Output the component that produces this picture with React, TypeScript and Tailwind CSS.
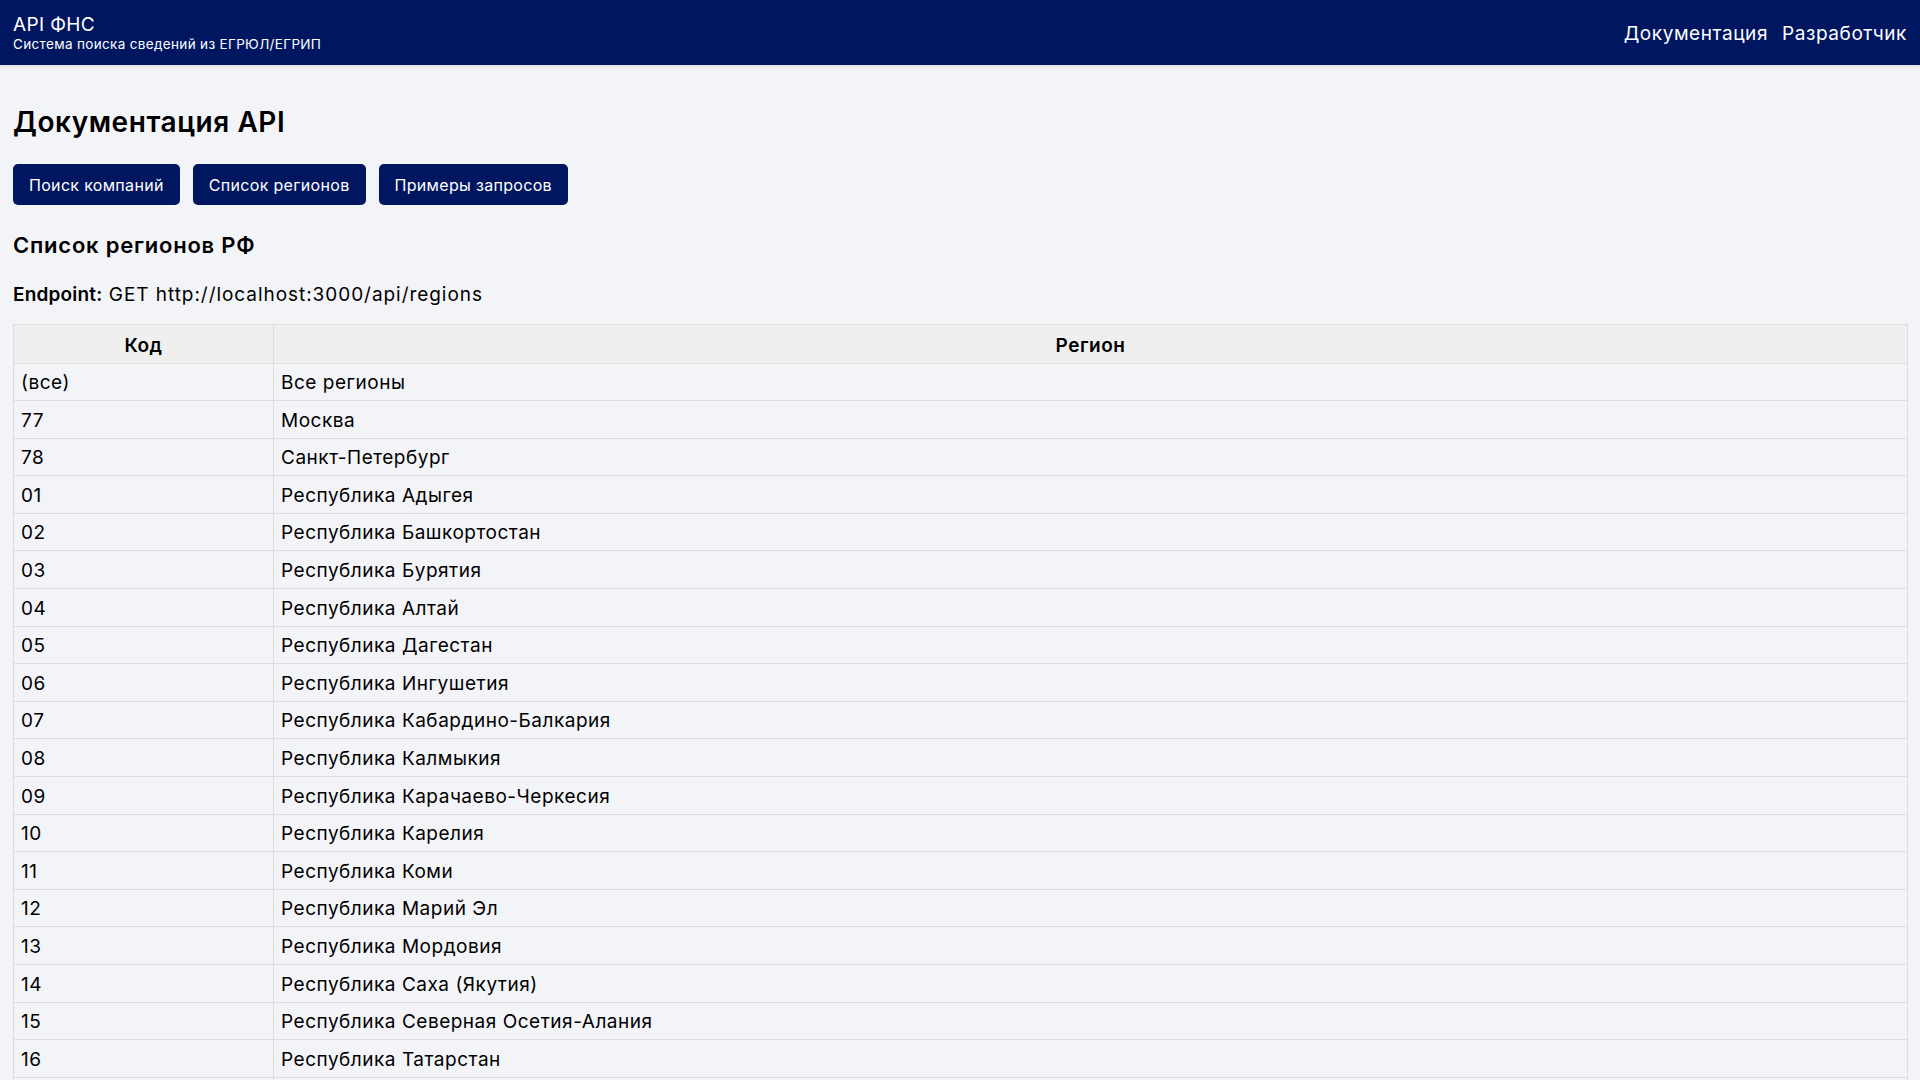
import React from "react";

const regions: [string, string][] = [
  ["(все)", "Все регионы"],
  ["77", "Москва"],
  ["78", "Санкт-Петербург"],
  ["01", "Республика Адыгея"],
  ["02", "Республика Башкортостан"],
  ["03", "Республика Бурятия"],
  ["04", "Республика Алтай"],
  ["05", "Республика Дагестан"],
  ["06", "Республика Ингушетия"],
  ["07", "Республика Кабардино-Балкария"],
  ["08", "Республика Калмыкия"],
  ["09", "Республика Карачаево-Черкесия"],
  ["10", "Республика Карелия"],
  ["11", "Республика Коми"],
  ["12", "Республика Марий Эл"],
  ["13", "Республика Мордовия"],
  ["14", "Республика Саха (Якутия)"],
  ["15", "Республика Северная Осетия-Алания"],
  ["16", "Республика Татарстан"],
  ["17", "Республика Тыва"],
  ["18", "Удмуртская Республика"],
  ["19", "Республика Хакасия"],
  ["20", "Чеченская Республика"],
];

export default function App() {
  return (
    <div
      className="min-h-screen bg-[#f3f4f8] text-black"
      style={{ fontFamily: "Inter, 'Noto Sans', sans-serif" }}
    >
      <header className="h-[65px] bg-[#001660] text-white flex items-center justify-between px-[13px] shadow-[0_2px_4px_rgba(0,0,0,0.08)]">
        <div className="flex flex-col pt-[2px]">
          <div className="text-[19px] leading-[22px] tracking-[0.02em]">API ФНС</div>
          <div className="text-[13.5px] leading-[17px] tracking-[0.025em]">Система поиска сведений из ЕГРЮЛ/ЕГРИП</div>
        </div>
        <nav className="flex gap-[14px] text-[19px] tracking-[0.03em] pt-[4px]">
          <a>Документация</a>
          <a>Разработчик</a>
        </nav>
      </header>
      <main className="px-[13px] pr-[12px]">
        <h1 className="text-[28px] leading-[34px] font-semibold tracking-[0.02em] mt-[40px]">Документация API</h1>
        <div className="flex gap-[13px] mt-[25px]">
          <button className="h-[41px] px-[16px] rounded-[5px] bg-[#001660] text-white text-[16px] tracking-[0.02em]">Поиск компаний</button>
          <button className="h-[41px] px-[16px] rounded-[5px] bg-[#001660] text-white text-[16px] tracking-[0.02em]">Список регионов</button>
          <button className="h-[41px] px-[16px] rounded-[5px] bg-[#001660] text-white text-[16px] tracking-[0.02em]">Примеры запросов</button>
        </div>
        <h2 className="text-[22px] leading-[26px] font-semibold tracking-[0.035em] mt-[27px]">Список регионов РФ</h2>
        <p className="text-[19px] leading-[22px] tracking-[0.05em] mt-[26px]">
          <span className="font-semibold tracking-[0.01em]">Endpoint:</span> GET http://localhost:3000/api/regions
        </p>
        <table className="w-full border-collapse mt-[18px] text-[19px] tracking-[0.027em]">
          <thead>
            <tr className="bg-[#efefef]">
              <th className="w-[260px] h-[38.5px] border border-[#dddddd] font-semibold text-center px-[8px] pt-[4px] pb-0">Код</th>
              <th className="h-[38.5px] border border-[#dddddd] font-semibold text-center px-[8px] pt-[4px] pb-0">Регион</th>
            </tr>
          </thead>
          <tbody>
            {regions.map(([c, n]) => (
              <tr key={c}>
                <td className="h-[37.6px] border border-[#dddddd] px-[7px] pt-[3px] pb-0">{c}</td>
                <td className="h-[37.6px] border border-[#dddddd] px-[7px] pt-[3px] pb-0">{n}</td>
              </tr>
            ))}
          </tbody>
        </table>
      </main>
    </div>
  );
}
